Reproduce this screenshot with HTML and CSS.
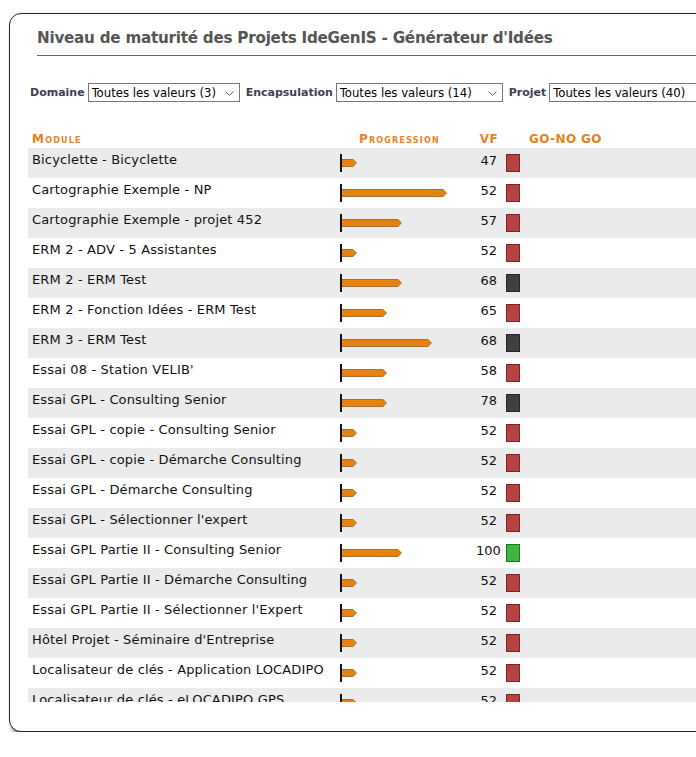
FILE: index.html
```html
<!DOCTYPE html>
<html lang="fr">
  <head>
    <meta charset="UTF-8" />
    <title>Niveau de maturité des Projets IdeGenIS</title>
    <link rel="stylesheet" href="styles.css">
  </head>
  <body>
    <div class="card">
      <h1 class="title">Niveau de maturité des Projets IdeGenIS - Générateur d'Idées</h1>

      <div class="filters">
        <label class="filter-label" for="domaine">Domaine</label>
        <span class="select-wrap sel-domaine">
          <select id="domaine"><option>Toutes les valeurs (3)</option></select>
          <svg class="chevron" width="9" height="5" viewBox="0 0 9 5"><polyline points="0.5,0.5 4.5,4.5 8.5,0.5" fill="none" stroke="#666" stroke-width="1"/></svg>
        </span>
        <label class="filter-label" for="encapsulation">Encapsulation</label>
        <span class="select-wrap sel-encaps">
          <select id="encapsulation"><option>Toutes les valeurs (14)</option></select>
          <svg class="chevron" width="9" height="5" viewBox="0 0 9 5"><polyline points="0.5,0.5 4.5,4.5 8.5,0.5" fill="none" stroke="#666" stroke-width="1"/></svg>
        </span>
        <label class="filter-label" for="projet">Projet</label>
        <span class="select-wrap sel-projet">
          <select id="projet"><option>Toutes les valeurs (40)</option></select>
          <svg class="chevron" width="9" height="5" viewBox="0 0 9 5"><polyline points="0.5,0.5 4.5,4.5 8.5,0.5" fill="none" stroke="#666" stroke-width="1"/></svg>
        </span>
      </div>

      <div class="table-wrap">
        <div class="thead">
          <div class="col-name">Module</div>
          <div class="col-prog">Progression</div>
          <div class="col-vf">VF</div>
          <div class="col-go">GO-NO GO</div>
        </div>

        <div class="row">
          <div class="col-name">Bicyclette - Bicyclette</div>
          <div class="col-prog"><span class="tick"></span><span class="bar" style="width: 15px"></span></div>
          <div class="col-vf">47</div>
          <div class="col-go"><span class="flag red"></span></div>
        </div>
        <div class="row">
          <div class="col-name">Cartographie Exemple - NP</div>
          <div class="col-prog"><span class="tick"></span><span class="bar" style="width: 105px"></span></div>
          <div class="col-vf">52</div>
          <div class="col-go"><span class="flag red"></span></div>
        </div>
        <div class="row">
          <div class="col-name">Cartographie Exemple - projet 452</div>
          <div class="col-prog"><span class="tick"></span><span class="bar" style="width: 60px"></span></div>
          <div class="col-vf">57</div>
          <div class="col-go"><span class="flag red"></span></div>
        </div>
        <div class="row">
          <div class="col-name">ERM 2 - ADV - 5 Assistantes</div>
          <div class="col-prog"><span class="tick"></span><span class="bar" style="width: 15px"></span></div>
          <div class="col-vf">52</div>
          <div class="col-go"><span class="flag red"></span></div>
        </div>
        <div class="row">
          <div class="col-name">ERM 2 - ERM Test</div>
          <div class="col-prog"><span class="tick"></span><span class="bar" style="width: 60px"></span></div>
          <div class="col-vf">68</div>
          <div class="col-go"><span class="flag dark"></span></div>
        </div>
        <div class="row">
          <div class="col-name">ERM 2 - Fonction Idées - ERM Test</div>
          <div class="col-prog"><span class="tick"></span><span class="bar" style="width: 45px"></span></div>
          <div class="col-vf">65</div>
          <div class="col-go"><span class="flag red"></span></div>
        </div>
        <div class="row">
          <div class="col-name">ERM 3 - ERM Test</div>
          <div class="col-prog"><span class="tick"></span><span class="bar" style="width: 90px"></span></div>
          <div class="col-vf">68</div>
          <div class="col-go"><span class="flag dark"></span></div>
        </div>
        <div class="row">
          <div class="col-name">Essai 08 - Station VELIB'</div>
          <div class="col-prog"><span class="tick"></span><span class="bar" style="width: 45px"></span></div>
          <div class="col-vf">58</div>
          <div class="col-go"><span class="flag red"></span></div>
        </div>
        <div class="row">
          <div class="col-name">Essai GPL - Consulting Senior</div>
          <div class="col-prog"><span class="tick"></span><span class="bar" style="width: 45px"></span></div>
          <div class="col-vf">78</div>
          <div class="col-go"><span class="flag dark"></span></div>
        </div>
        <div class="row">
          <div class="col-name">Essai GPL - copie - Consulting Senior</div>
          <div class="col-prog"><span class="tick"></span><span class="bar" style="width: 15px"></span></div>
          <div class="col-vf">52</div>
          <div class="col-go"><span class="flag red"></span></div>
        </div>
        <div class="row">
          <div class="col-name">Essai GPL - copie - Démarche Consulting</div>
          <div class="col-prog"><span class="tick"></span><span class="bar" style="width: 15px"></span></div>
          <div class="col-vf">52</div>
          <div class="col-go"><span class="flag red"></span></div>
        </div>
        <div class="row">
          <div class="col-name">Essai GPL - Démarche Consulting</div>
          <div class="col-prog"><span class="tick"></span><span class="bar" style="width: 15px"></span></div>
          <div class="col-vf">52</div>
          <div class="col-go"><span class="flag red"></span></div>
        </div>
        <div class="row">
          <div class="col-name">Essai GPL - Sélectionner l'expert</div>
          <div class="col-prog"><span class="tick"></span><span class="bar" style="width: 15px"></span></div>
          <div class="col-vf">52</div>
          <div class="col-go"><span class="flag red"></span></div>
        </div>
        <div class="row">
          <div class="col-name">Essai GPL Partie II - Consulting Senior</div>
          <div class="col-prog"><span class="tick"></span><span class="bar" style="width: 60px"></span></div>
          <div class="col-vf">100</div>
          <div class="col-go"><span class="flag green"></span></div>
        </div>
        <div class="row">
          <div class="col-name">Essai GPL Partie II - Démarche Consulting</div>
          <div class="col-prog"><span class="tick"></span><span class="bar" style="width: 15px"></span></div>
          <div class="col-vf">52</div>
          <div class="col-go"><span class="flag red"></span></div>
        </div>
        <div class="row">
          <div class="col-name">Essai GPL Partie II - Sélectionner l'Expert</div>
          <div class="col-prog"><span class="tick"></span><span class="bar" style="width: 15px"></span></div>
          <div class="col-vf">52</div>
          <div class="col-go"><span class="flag red"></span></div>
        </div>
        <div class="row">
          <div class="col-name">Hôtel Projet - Séminaire d'Entreprise</div>
          <div class="col-prog"><span class="tick"></span><span class="bar" style="width: 15px"></span></div>
          <div class="col-vf">52</div>
          <div class="col-go"><span class="flag red"></span></div>
        </div>
        <div class="row">
          <div class="col-name">Localisateur de clés - Application LOCADIPO</div>
          <div class="col-prog"><span class="tick"></span><span class="bar" style="width: 15px"></span></div>
          <div class="col-vf">52</div>
          <div class="col-go"><span class="flag red"></span></div>
        </div>
        <div class="row">
          <div class="col-name">Localisateur de clés - eLOCADIPO GPS</div>
          <div class="col-prog"><span class="tick"></span><span class="bar" style="width: 15px"></span></div>
          <div class="col-vf">52</div>
          <div class="col-go"><span class="flag red"></span></div>
        </div>
      </div>
    </div>
  </body>
</html>
```

FILE: styles.css
```css
html,
body {
  margin: 0;
  padding: 0;
  overflow: hidden;
  background: #fff;
  font-family: "DejaVu Sans", Verdana, sans-serif;
  color: #111;
}

/* main panel */
.card {
  margin: 13px 0 0 9px;
  width: 760px;
  border: 1px solid #222;
  border-radius: 12px;
  box-shadow: 3px 4px 4px rgba(0, 0, 0, 0.7);
  padding-bottom: 29px;
  background: #fff;
}

.title {
  margin: 0 0 0 27px;
  padding: 15px 0 7px 0;
  font-size: 15.2px;
  line-height: 19px;
  font-weight: bold;
  letter-spacing: -0.25px;
  color: #555;
  border-bottom: 1px solid #666;
}

/* filters */
.filters {
  display: flex;
  align-items: center;
  margin: 27px 0 0 20px;
  white-space: nowrap;
}

.filter-label {
  font-size: 11px;
  font-weight: bold;
  color: #404050;
  margin-right: 3px;
}

.select-wrap {
  position: relative;
  display: inline-block;
  margin-right: 6px;
}

.select-wrap select {
  -webkit-appearance: none;
  appearance: none;
  display: block;
  height: 19px;
  margin: 0;
  padding: 0 0 0 3px;
  border: 1px solid #777;
  border-radius: 0;
  background: #fff;
  color: #000;
  font-family: "DejaVu Sans Condensed", "DejaVu Sans", sans-serif;
  font-stretch: condensed;
  font-size: 13px;
  line-height: 17px;
}

.sel-domaine select {
  width: 152px;
}

.sel-encaps select {
  width: 167px;
}

.sel-projet select {
  width: 170px;
}

.chevron {
  position: absolute;
  right: 6px;
  top: 8px;
}

/* table */
.table-wrap {
  margin: 29px 0 0 18px;
  height: 571px;
  overflow: hidden;
}

.thead,
.row {
  display: flex;
  padding-left: 4px;
}

.thead {
  height: 17px;
  font-size: 12px;
  line-height: 16px;
  font-weight: bold;
  font-variant: small-caps;
  letter-spacing: 1.2px;
  color: #e8821e;
}

.row {
  height: 30px;
}

.row:nth-child(even) {
  background: #ebebeb;
}

.col-name {
  width: 308px;
  flex: none;
}

.col-prog {
  width: 136px;
  flex: none;
}

.col-vf {
  width: 21px;
  flex: none;
  text-align: right;
}

.col-go {
  flex: none;
}

.thead .col-prog {
  padding-left: 19px;
  width: 117px;
}

.thead .col-vf,
.thead .col-go {
  letter-spacing: 0.4px;
}

.thead .col-vf {
  width: 22px;
}

.thead .col-go {
  margin-left: 31px;
}

.row .col-name {
  padding-top: 4px;
  font-size: 13px;
  line-height: 16px;
  letter-spacing: 0.15px;
  white-space: nowrap;
}

.row .col-vf {
  padding-top: 5px;
  font-size: 13px;
  line-height: 16px;
}

.row .col-prog {
  display: flex;
  align-items: flex-start;
  padding-top: 6px;
}

.tick {
  width: 2px;
  height: 18px;
  background: #111;
}

.bar {
  position: relative;
  margin-top: 5px;
  height: 8px;
  background: #a3723f;
  clip-path: polygon(0 0, calc(100% - 4px) 0, 100% 50%, calc(100% - 4px) 100%, 0 100%);
}

.bar::after {
  content: "";
  position: absolute;
  left: 0;
  right: 1px;
  top: 1px;
  bottom: 1px;
  background: #e8820e;
  clip-path: polygon(0 0, calc(100% - 3px) 0, 100% 50%, calc(100% - 3px) 100%, 0 100%);
}

.row .col-go {
  padding: 6px 0 0 9px;
}

.flag {
  display: block;
  box-sizing: border-box;
  width: 14px;
  height: 18px;
  border: 1px solid;
}

.flag.red {
  background: #b84242;
  border-color: #762626;
}

.flag.dark {
  background: #404040;
  border-color: #262626;
}

.flag.green {
  background: #3cb83c;
  border-color: #26702a;
}
```
